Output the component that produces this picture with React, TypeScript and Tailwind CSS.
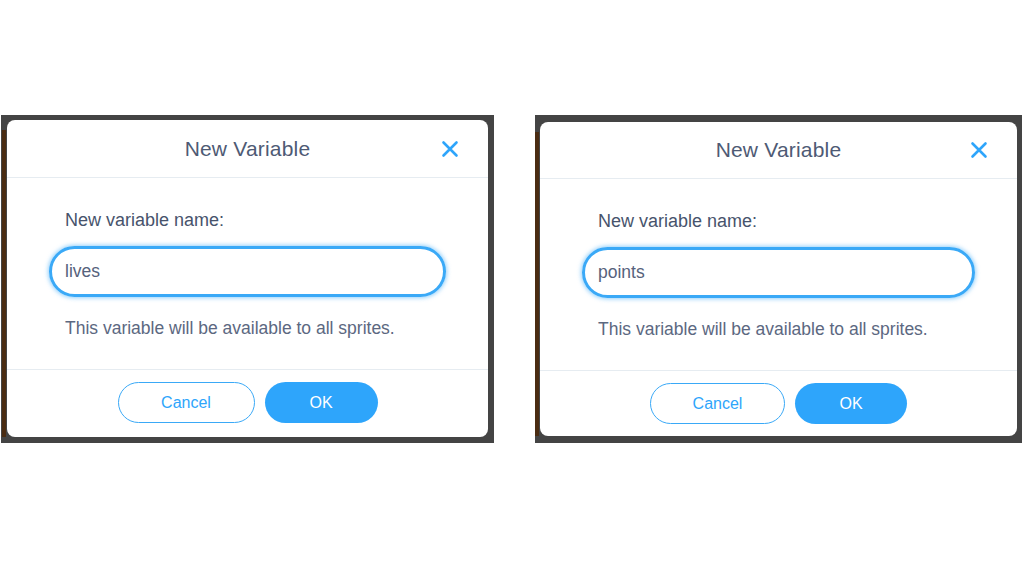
import React from 'react';

interface DialogProps {
  value: string;
  frameClass: string;
  dialogClass: string;
  headerClass: string;
  cancelClass: string;
  okClass: string;
}

const font = { fontFamily: '"Liberation Sans", Arial, sans-serif' };

const CloseIcon: React.FC = () => (
  <svg width="18" height="18" viewBox="0 0 18 18" fill="none">
    <path d="M2.5 2.5 L15.5 15.5 M15.5 2.5 L2.5 15.5" stroke="#2ea5fb" strokeWidth="2.6" strokeLinecap="round" />
  </svg>
);

const VariableDialog: React.FC<DialogProps> = ({ value, frameClass, dialogClass, headerClass, cancelClass, okClass }) => {
  return (
    <div className={`bg-[#444444] flex ${frameClass}`}>
      {/* brown edge of the editor behind */}
      <div className="w-[4px] mt-[10px] bg-[#4a2c12]" />
      <div className={`bg-white rounded-[8px] flex flex-col ml-[1px] ${dialogClass}`}>
        {/* Header */}
        <div className={`relative flex items-center justify-center border-b border-[#e6ecf1] ${headerClass}`}>
          <span className="text-[21px] text-[#4e5a74] tracking-[0.2px]">New Variable</span>
          <button className="absolute right-[29px] top-1/2 -translate-y-1/2 flex items-center">
            <CloseIcon />
          </button>
        </div>

        {/* Body */}
        <div className="flex flex-col px-[42px] pt-[31px] h-[191px]">
          <label className="pl-[16px] text-[18px] leading-[22px] text-[#47536c]">New variable name:</label>
          <div className="mt-[15px] h-[51px] rounded-full border-[3px] border-[#3aa9f7] shadow-[0_0_4px_1px_rgba(58,169,247,0.55)] flex items-center pl-[13px]">
            <span className="text-[17.5px] text-[#56627c]">{value}</span>
          </div>
          <p className="mt-[20px] pl-[16px] text-[17.5px] leading-[22px] text-[#5c6881]">
            This variable will be available to all sprites.
          </p>
        </div>

        {/* Footer */}
        <div className="border-t border-[#e6ecf1] flex justify-center gap-[10px] pt-[12px]">
          <button className={`h-[41px] rounded-full border-[1.5px] border-[#3aa9f7] text-[#2ea5fb] text-[16px] ${cancelClass}`}>
            Cancel
          </button>
          <button className={`h-[41px] rounded-full bg-[#2ea5fb] text-white text-[16px] ${okClass}`}>
            OK
          </button>
        </div>
      </div>
    </div>
  );
};

export default function App() {
  return (
    <div className="w-[1024px] h-[567px] bg-white flex items-start pt-[115px] pl-[1px] gap-[41px]" style={font}>
      <VariableDialog
        value="lives"
        frameClass="w-[493px] h-[328px] pl-[1px] pr-[6px] pt-[5px] pb-[6px]"
        dialogClass="w-[481px] h-[317px]"
        headerClass="h-[58px]"
        cancelClass="w-[137px]"
        okClass="w-[113px]"
      />
      <VariableDialog
        value="points"
        frameClass="w-[487px] h-[328px] pr-[5px] pt-[7px] pb-[7px]"
        dialogClass="w-[477px] h-[314px]"
        headerClass="h-[57px]"
        cancelClass="w-[135px]"
        okClass="w-[112px]"
      />
    </div>
  );
}
